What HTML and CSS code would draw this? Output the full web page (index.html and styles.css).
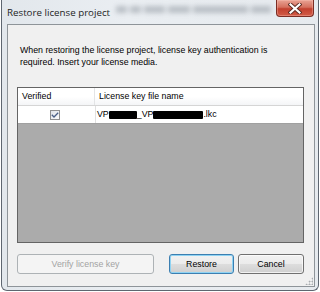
FILE: index.html
```html
<!DOCTYPE html>
<html>
<head>
<meta charset="utf-8">
<link rel="stylesheet" href="styles.css">
</head>
<body>
<div class="window">
  <div class="titlebar">
    <span class="title">Restore license project</span>
    <div class="ghost" aria-hidden="true">
      <i class="g1"></i><i class="g2"></i><i class="g3"></i><i class="g4"></i><i class="g5"></i><i class="g6"></i>
    </div>
    <button class="close" aria-label="Close">
      <svg width="14" height="11" viewBox="0 0 14 11">
        <path d="M2.5 1.5 L11.5 9.5 M11.5 1.5 L2.5 9.5" stroke="#5a2a22" stroke-width="4" stroke-linecap="square"/>
        <path d="M2.5 1.5 L11.5 9.5 M11.5 1.5 L2.5 9.5" stroke="#ffffff" stroke-width="2.2" stroke-linecap="square"/>
      </svg>
    </button>
  </div>
  <div class="client">
    <p class="intro">When restoring the license project, license key authentication is<br>required. Insert your license media.</p>
    <div class="grid">
      <div class="grid-head">
        <div class="col-a">Verified</div>
        <div class="col-b">License key file name</div>
      </div>
      <div class="grid-row">
        <div class="col-a cell-check">
          <span class="check">
            <svg width="8" height="6" viewBox="0 0 8 6"><path d="M0.8 2.8 L3 5 L7.2 0.8" fill="none" stroke="#4a5f86" stroke-width="1.3"/></svg>
          </span>
        </div>
        <div class="col-b cell-name">VP<span class="redact r1"></span>_VP<span class="redact r2"></span>.lkc</div>
      </div>
      <div class="grid-empty"></div>
    </div>
    <div class="buttons">
      <button class="btn btn-verify" disabled>Verify license key</button>
      <span class="spacer"></span>
      <button class="btn btn-restore">Restore</button>
      <button class="btn btn-cancel">Cancel</button>
    </div>
    <span class="grip"></span>
  </div>
</div>
</body>
</html>
```
FILE: styles.css
```css
html, body {
  margin: 0;
  padding: 0;
  background: #ffffff;
}
body {
  width: 320px;
  height: 292px;
  overflow: hidden;
  font-family: "Liberation Sans", Arial, sans-serif;
}
.window {
  position: relative;
  margin-left: 1px;
  width: 318px;
  height: 291px;
  box-sizing: border-box;
  border: 1px solid #5e6670;
  border-top: none;
  border-radius: 0 0 6px 6px;
  background: linear-gradient(90deg, #e2e7ec 0%, #eaeef2 40%, #e6eaee 100%);
  display: flex;
  flex-direction: column;
}
.titlebar {
  height: 24px;
  display: flex;
  align-items: flex-start;
  position: relative;
}
.title {
  font-family: "Open Sans", "Noto Sans", sans-serif;
  font-size: 9.75px;
  color: #1e1e1e;
  padding: 6px 0 0 5px;
}
.ghost {
  position: absolute;
  left: 114px;
  top: 6px;
  display: flex;
  gap: 3px;
  align-items: center;
  filter: blur(2.4px);
  opacity: 0.6;
}
.ghost i {
  display: block;
  height: 7px;
  background: #9aa1a9;
}
.ghost .g1 { width: 11px; }
.ghost .g2 { width: 11px; }
.ghost .g3 { width: 21px; }
.ghost .g4 { width: 22px; }
.ghost .g5 { width: 55px; }
.ghost .g6 { width: 20px; }
.close {
  position: absolute;
  right: 4px;
  top: 0;
  width: 38px;
  height: 17px;
  padding: 0;
  border: 1px solid #7b2d24;
  border-top: none;
  border-radius: 0 0 4px 4px;
  background: linear-gradient(180deg, #e9a394 0%, #d5705e 45%, #c2402f 55%, #d25c47 100%);
  display: flex;
  align-items: center;
  justify-content: center;
  box-shadow: inset 0 0 0 1px rgba(255,200,190,0.35);
}
.client {
  position: relative;
  margin: 0 3px 3px 5px;
  flex: 1;
  border: 1px solid #8e9499;
  background: #f0f0f0;
  padding: 19px 10px 12px 9px;
  display: flex;
  flex-direction: column;
  font-size: 8.8px;
  color: #000;
}
.intro {
  margin: 0 0 19px 3px;
  line-height: 12px;
  font-size: 8.8px;
  white-space: nowrap;
}
.grid {
  height: 156px;
  box-sizing: border-box;
  border: 1px solid #646464;
  background: #ababab;
  display: flex;
  flex-direction: column;
}
.grid-head {
  display: flex;
  height: 17px;
  background: linear-gradient(180deg, #ffffff 0%, #ffffff 50%, #f4f5f7 100%);
  border-bottom: 1px solid #d5d5d5;
  line-height: 16px;
}
.grid-head .col-a {
  width: 77px;
  padding-left: 4px;
  box-sizing: border-box;
  border-right: 1px solid #e3e4e6;
}
.grid-head .col-b {
  flex: 1;
  padding-left: 4px;
}
.grid-row {
  display: flex;
  height: 18px;
  background: #ffffff;
  border-bottom: 1px solid #a0a0a0;
  box-sizing: border-box;
}
.grid-row .col-a {
  width: 78px;
  box-sizing: border-box;
  border-right: 1px solid #e0e0e0;
}
.cell-check {
  display: flex;
  align-items: center;
  justify-content: center;
}
.check {
  width: 8px;
  height: 8px;
  border: 1px solid #8f8f8f;
  background: linear-gradient(135deg, #dfe3e8, #fbfbfb);
  display: flex;
  align-items: center;
  justify-content: center;
  margin-right: 4px;
}
.cell-name {
  flex: 1;
  padding-left: 1px;
  line-height: 17px;
  display: flex;
  align-items: center;
}
.redact {
  display: inline-block;
  height: 8px;
  background: #000;
  border-radius: 1px;
}
.r1 { width: 28px; }
.r2 { width: 50px; }
.grid-empty { flex: 1; }
.buttons {
  display: flex;
  margin-top: 11px;
  height: 20px;
}
.spacer { flex: 1; }
.btn {
  height: 20px;
  box-sizing: border-box;
  border: 1px solid #707070;
  border-radius: 3px;
  background: linear-gradient(180deg, #f2f2f2 0%, #ebebeb 50%, #dddddd 51%, #cfcfcf 100%);
  font-family: "Liberation Sans", Arial, sans-serif;
  font-size: 8.8px;
  color: #000;
  padding: 0;
  box-shadow: inset 0 0 0 1px rgba(255,255,255,0.7);
}
.btn-verify {
  width: 137px;
  border-color: #adb2b5;
  background: #f4f4f4;
  color: #a3a3a3;
  box-shadow: none;
}
.btn-restore {
  width: 65px;
  border-color: #3c7fb1;
  box-shadow: inset 0 0 0 1px #8fd3f3;
}
.btn-cancel {
  width: 66px;
  margin-left: 4px;
}
.grip {
  position: absolute;
  right: 1px;
  bottom: 1px;
  width: 8px;
  height: 8px;
  background:
    radial-gradient(circle, #a8acb0 0.8px, transparent 1.2px) 0 0 / 3px 3px;
  clip-path: polygon(100% 0, 100% 100%, 0 100%);
}
```
